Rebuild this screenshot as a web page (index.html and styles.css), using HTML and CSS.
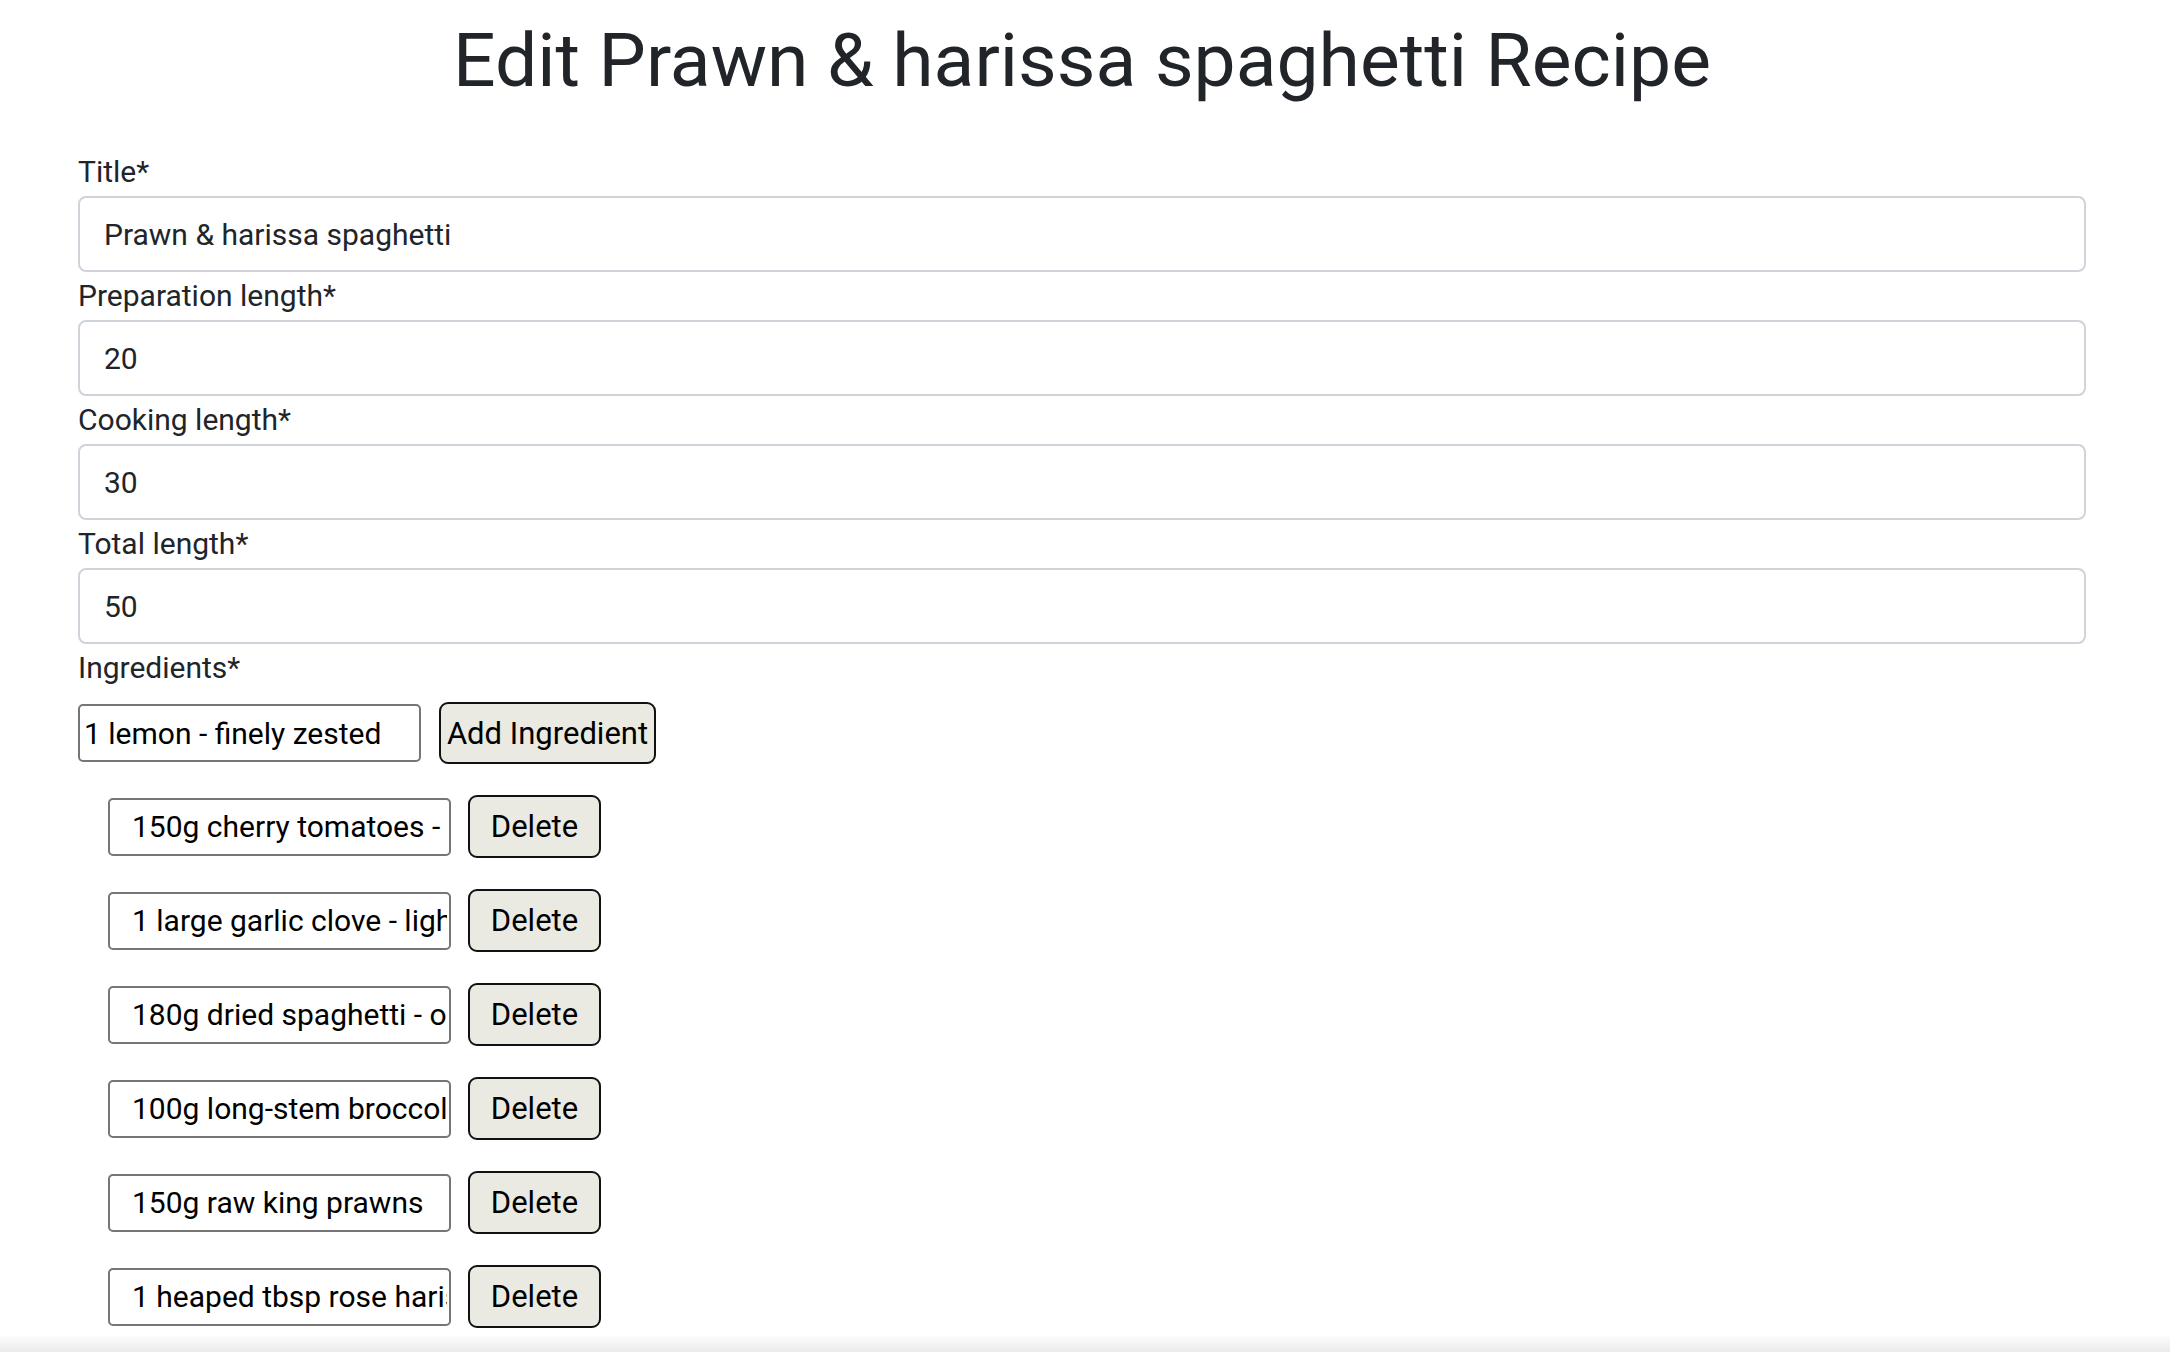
FILE: index.html
```html
<!DOCTYPE html>
<html lang="en">
<head>
<meta charset="utf-8">
<title>Edit Prawn &amp; harissa spaghetti Recipe</title>
<link rel="stylesheet" href="styles.css">
</head>
<body>
<main class="page">
  <h1 class="heading">Edit Prawn &amp; harissa spaghetti Recipe</h1>
  <form class="recipe-form">
    <div class="field">
      <label class="field-label" for="title">Title*</label>
      <input class="form-control" id="title" type="text" value="Prawn &amp; harissa spaghetti">
    </div>
    <div class="field">
      <label class="field-label" for="prep">Preparation length*</label>
      <input class="form-control" id="prep" type="text" value="20">
    </div>
    <div class="field">
      <label class="field-label" for="cook">Cooking length*</label>
      <input class="form-control" id="cook" type="text" value="30">
    </div>
    <div class="field">
      <label class="field-label" for="total">Total length*</label>
      <input class="form-control" id="total" type="text" value="50">
    </div>
    <div class="field">
      <label class="field-label" for="ing">Ingredients*</label>
      <div class="add-row">
        <input class="ing-input ing-new" id="ing" type="text" value="1 lemon - finely zested">
        <button class="btn btn-add" type="button">Add Ingredient</button>
      </div>
      <ul class="ing-list">
        <li class="ing-row"><input class="ing-input ing-item" type="text" value="150g cherry tomatoes - halved"><button class="btn btn-delete" type="button">Delete</button></li>
        <li class="ing-row"><input class="ing-input ing-item" type="text" value="1 large garlic clove - lightly crushed"><button class="btn btn-delete" type="button">Delete</button></li>
        <li class="ing-row"><input class="ing-input ing-item" type="text" value="180g dried spaghetti - or linguine"><button class="btn btn-delete" type="button">Delete</button></li>
        <li class="ing-row"><input class="ing-input ing-item" type="text" value="100g long-stem broccoli"><button class="btn btn-delete" type="button">Delete</button></li>
        <li class="ing-row"><input class="ing-input ing-item" type="text" value="150g raw king prawns"><button class="btn btn-delete" type="button">Delete</button></li>
        <li class="ing-row"><input class="ing-input ing-item" type="text" value="1 heaped tbsp rose harissa"><button class="btn btn-delete" type="button">Delete</button></li>
      </ul>
    </div>
  </form>
</main>
<div class="bottom-fade"></div>
</body>
</html>
```

FILE: styles.css
```css
* {
  box-sizing: border-box;
}

html, body {
  margin: 0;
  padding: 0;
  background: #ffffff;
}

body {
  font-family: Roboto, "Liberation Sans", sans-serif;
  color: #212529;
  overflow: hidden;
}

.page {
  padding: 12px 84px 0 78px;
}

.heading {
  margin: 0 0 40px 0;
  font-size: 75px;
  font-weight: 400;
  line-height: 96px;
  text-align: center;
  color: #212529;
}

.recipe-form {
  display: flex;
  flex-direction: column;
}

.field {
  display: flex;
  flex-direction: column;
}

.field-label {
  display: block;
  font-size: 30px;
  line-height: 48px;
  color: #212529;
}

.form-control {
  display: block;
  width: 100%;
  height: 76px;
  padding: 0 24px;
  font-family: Roboto, "Liberation Sans", sans-serif;
  font-size: 30px;
  color: #212529;
  background: #ffffff;
  border: 2px solid #ced4da;
  border-radius: 8px;
  outline: none;
}

.add-row {
  display: flex;
  align-items: center;
  gap: 18px;
  margin-top: 10px;
}

.ing-input {
  width: 343px;
  height: 58px;
  font-family: Roboto, "Liberation Sans", sans-serif;
  font-size: 30px;
  color: #000000;
  background: #ffffff;
  border: 2px solid #767676;
  border-radius: 5px;
  outline: none;
}

.ing-new {
  padding: 0 2px 0 4px;
}

.ing-item {
  padding: 0 2px 0 22px;
}

.btn {
  height: 62px;
  font-family: Roboto, "Liberation Sans", sans-serif;
  font-size: 31px;
  color: #000000;
  background: #eaeae2;
  border: 2px solid #111111;
  border-radius: 9px;
  cursor: pointer;
}

.btn-add {
  width: 217px;
  padding: 0 2px;
}

.btn-delete {
  width: 133px;
  height: 63px;
  padding: 0;
}

.ing-list {
  list-style: none;
  margin: 0;
  padding: 0 0 0 30px;
}

.ing-row {
  display: flex;
  align-items: center;
  gap: 17px;
  margin-top: 31px;
}

.bottom-fade {
  position: fixed;
  left: 0;
  right: 0;
  bottom: 0;
  height: 18px;
  background: linear-gradient(to bottom, rgba(235, 235, 235, 0), #ebebeb);
  pointer-events: none;
}
```
